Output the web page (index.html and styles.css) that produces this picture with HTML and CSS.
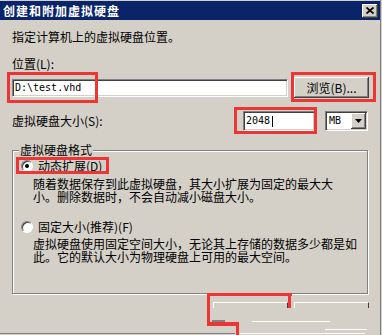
FILE: index.html
```html
<!DOCTYPE html>
<html lang="zh-CN">
<head>
<meta charset="utf-8">
<title>创建和附加虚拟硬盘</title>
<link rel="stylesheet" href="styles.css">
</head>
<body>
<div class="window">
  <div class="titlebar">
    <span class="title">创建和附加虚拟硬盘</span>
    <span class="close"><svg width="8" height="7" viewBox="0 0 8 7"><path d="M0.5 0.5 L7.5 6.5 M7.5 0.5 L0.5 6.5" stroke="#000" stroke-width="1.7" fill="none"/></svg></span>
  </div>
  <div class="content">
    <p class="intro">指定计算机上的虚拟硬盘位置。</p>
    <label class="field-label">位置(L):</label>
    <div class="row row-path">
      <div class="textbox path">D:\test.vhd</div>
      <div class="btn browse">浏览(B)...</div>
    </div>
    <div class="row row-size">
      <span class="size-label">虚拟硬盘大小(S):</span>
      <div class="textbox size">2048<span class="caret"></span></div>
      <div class="select"><span class="select-value">MB</span><span class="btn arrow"><svg width="7" height="4" viewBox="0 0 7 4"><path d="M0 0H7L3.5 4Z" fill="#000"/></svg></span></div>
    </div>
    <fieldset class="group">
      <legend>虚拟硬盘格式</legend>
      <div class="group-body">
        <div class="option opt-dynamic"><span class="radio checked"></span><span>动态扩展(D)</span></div>
        <p class="desc desc-dynamic">随着数据保存到此虚拟硬盘，其大小扩展为固定的最大大<br>小。删除数据时，不会自动减小磁盘大小。</p>
        <div class="option opt-fixed"><span class="radio"></span><span>固定大小(推荐)(F)</span></div>
        <p class="desc desc-fixed">虚拟硬盘使用固定空间大小，无论其上存储的数据多少都是如<br>此。它的默认大小为物理硬盘上可用的最大空间。</p>
      </div>
    </fieldset>
    <div class="footer">
      <div class="ghost"></div>
      <div class="ghost"></div>
    </div>
  </div>

  <div class="artifact art1"></div>
  <div class="artifact art2"></div>
  <div class="artifact art3"></div>
  <div class="artifact art4"></div>
  <div class="artifact art5"></div>

  <div class="mark mark-path"></div>
  <div class="mark mark-browse"></div>
  <div class="mark mark-size"></div>
  <div class="mark mark-radio"></div>
  <div class="bar bar-top"></div>
  <div class="bar bar-right"></div>
  <div class="bar bar-left"></div>
  <div class="bar bar-bottom"></div>
  <div class="bar bar-tail"></div>
</div>
</body>
</html>
```
FILE: styles.css
```css
html, body {
  margin: 0;
  padding: 0;
}
body {
  width: 382px;
  height: 335px;
  overflow: hidden;
  background: #D4D0C8;
  font: 12px/14px "Noto Sans CJK SC", sans-serif;
  color: #000;
}
.window {
  position: relative;
  width: 381px;
  height: 335px;
  box-sizing: border-box;
  border-right: 1px solid #808080;
  padding-top: 1px;
}
.titlebar {
  height: 19px;
  background: #0A246A;
  display: flex;
  align-items: center;
  justify-content: space-between;
  padding: 0 2px 0 3px;
}
.title {
  color: #fff;
  font-weight: bold;
  letter-spacing: 1px;
  line-height: 19px;
}
.close {
  width: 16px;
  height: 14px;
  background: #D4D0C8;
  box-shadow: inset -1px -1px #404040, inset 1px 1px #fff, inset -2px -2px #808080;
  display: flex;
  align-items: center;
  justify-content: center;
}
.close svg { display: block; }
.content {
  padding: 0 11px 0 12px;
}
.intro {
  margin: 10px 0 0;
}
.field-label {
  display: block;
  margin-top: 13px;
}
.row {
  display: flex;
  align-items: center;
}
.row-path {
  margin-top: 6px;
  height: 21px;
  gap: 6px;
}
.textbox {
  background: #fff;
  border: 1px solid;
  border-color: #808080 #fff #fff #808080;
  box-shadow: inset 1px 1px #404040, inset -1px -1px #D4D0C8;
  box-sizing: border-box;
  font: 10px/14px "DejaVu Sans Mono", monospace;
  display: flex;
  align-items: center;
}
.path {
  flex: 1;
  height: 18px;
  padding-left: 2px;
}
.btn {
  background: #D4D0C8;
  box-shadow: inset -1px -1px #404040, inset 1px 1px #fff, inset -2px -2px #808080;
  box-sizing: border-box;
}
.browse {
  width: 75px;
  height: 21px;
  display: flex;
  align-items: center;
  justify-content: center;
}
.row-size {
  margin-top: 13px;
  height: 20px;
}
.size-label {
  flex: 1;
}
.size {
  width: 72px;
  height: 20px;
  padding-left: 2px;
}
.caret {
  width: 1px;
  height: 11px;
  background: #000;
  margin-left: 2px;
}
.select {
  width: 43px;
  height: 20px;
  margin: 0 1px 0 10px;
  background: #fff;
  border: 1px solid;
  border-color: #808080 #fff #fff #808080;
  box-shadow: inset 1px 1px #404040, inset -1px -1px #D4D0C8;
  box-sizing: border-box;
  padding: 1px;
  display: flex;
  align-items: center;
  justify-content: space-between;
}
.select-value {
  font: 10px/14px "DejaVu Sans Mono", monospace;
  padding-left: 2px;
}
.arrow {
  width: 15px;
  height: 16px;
  display: flex;
  align-items: center;
  justify-content: center;
}
.arrow svg { display: block; }
.group {
  margin: 12px 0 0;
  padding: 0 0 30px;
  width: 356px;
  min-inline-size: 0;
  box-sizing: border-box;
  border: 1px solid #808080;
  box-shadow: 1px 1px 0 #fff, inset 1px 1px 0 #fff;
}
.group legend {
  margin-left: 6px;
  padding: 0 1px;
  background: #D4D0C8;
  line-height: 14px;
}
.group-body {
  padding-left: 8px;
}
.option {
  display: flex;
  align-items: center;
  gap: 5px;
  height: 16px;
}
.opt-dynamic { margin-top: 1px; }
.opt-fixed { margin-top: 16px; }
.radio {
  width: 12px;
  height: 12px;
  border-radius: 50%;
  box-sizing: border-box;
  border: 1px solid;
  border-color: #808080 #fff #fff #808080;
  background: #fff;
  box-shadow: inset 1px 1px #404040;
  display: flex;
  align-items: center;
  justify-content: center;
}
.radio.checked::after {
  content: "";
  width: 4px;
  height: 4px;
  border-radius: 50%;
  background: #000;
}
.desc {
  margin: 3px 0 0 12px;
  line-height: 13px;
  white-space: nowrap;
}
.desc-fixed { margin-top: 2px; }
.footer {
  display: flex;
  justify-content: flex-end;
  gap: 6px;
  margin-top: 8px;
}
.ghost {
  width: 75px;
  height: 6px;
  box-sizing: border-box;
  border-top: 1px solid #fff;
  border-left: 1px solid #fff;
  border-right: 1px solid #404040;
}
.artifact {
  position: absolute;
  height: 1px;
}
.art1 { left: 252px; top: 321px; width: 78px; background: #fff; }
.art2 { left: 325px; top: 329px; width: 42px; background: #fff; }
.art3 { left: 212px; top: 320px; width: 13px; height: 2px; background: #808080; }
.art4 { left: 0; top: 333px; width: 235px; background: #808080; }
.art5 { left: 240px; top: 333px; width: 125px; background: #fff; }
.mark {
  position: absolute;
  border: 3px solid #EE3535;
  box-sizing: border-box;
}
.mark-path { left: 7px; top: 72px; width: 91px; height: 31px; }
.mark-browse { left: 291px; top: 72px; width: 85px; height: 30px; }
.mark-size { left: 234px; top: 107px; width: 83px; height: 27px; }
.mark-radio { left: 16px; top: 157px; width: 93px; height: 17px; }
.bar {
  position: absolute;
  background: #EE3535;
}
.bar-top { left: 207px; top: 293px; width: 85px; height: 3px; }
.bar-right { left: 288px; top: 293px; width: 3px; height: 15px; }
.bar-left { left: 207px; top: 293px; width: 3px; height: 33px; }
.bar-bottom { left: 207px; top: 322px; width: 32px; height: 4px; }
.bar-tail { left: 236px; top: 322px; width: 3px; height: 13px; }
```
